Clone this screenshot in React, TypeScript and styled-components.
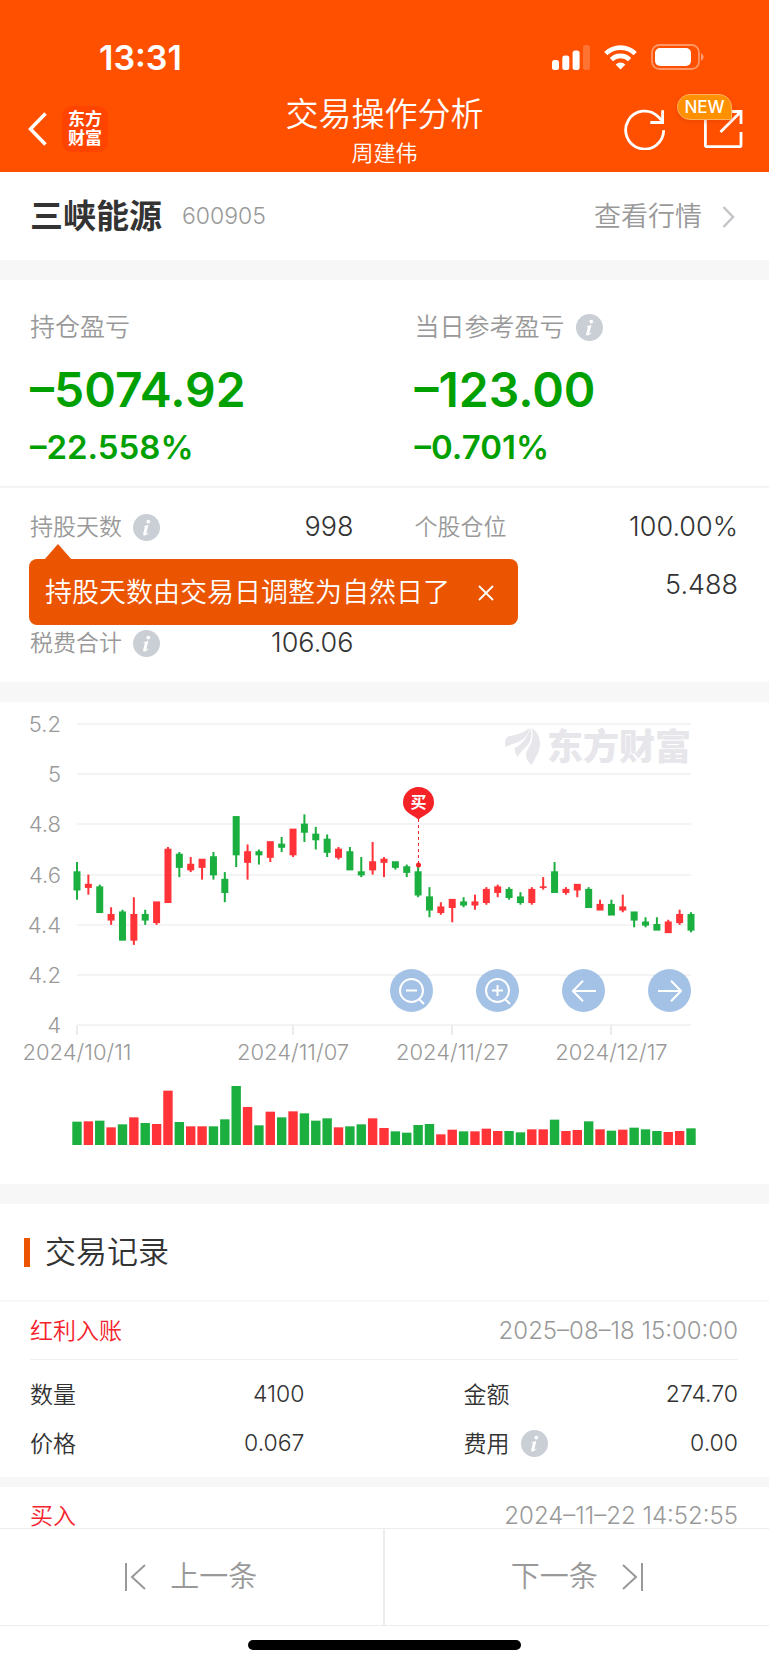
import React, { useState } from 'react';
import styled, { createGlobalStyle } from 'styled-components';

const GlobalStyle = createGlobalStyle`
  *, *::before, *::after { box-sizing: border-box; }
  body {
    margin: 0;
    background: #fff;
    color: #333;
    font-family: Inter, "Noto Sans CJK SC", sans-serif;
    font-size: 23px;
    font-weight: 350;
    line-height: 1.2;
  }
  button { font: inherit; color: inherit; border: 0; padding: 0; background: none; cursor: pointer; }
  a { color: inherit; text-decoration: none; }
  h1, h2, p, dl, dt, dd { margin: 0; font-weight: inherit; }
  svg { display: block; }
`;

const Screen = styled.div`
  display: flex;
  flex-direction: column;
  height: 100vh;
  background: #fff;
`;

/* ---------- header ---------- */

const Header = styled.header`
  flex: none;
  background: #ff5000;
  color: #fff;
`;

const StatusBar = styled.div`
  display: flex;
  align-items: center;
  justify-content: space-between;
  height: 86px;
  padding: 28px 65px 0 99px;
`;

const Clock = styled.time`
  padding-top: 2px;
  font-size: 34px;
  font-weight: 600;
  line-height: 40px;
`;

const StatusIcons = styled.div`
  display: flex;
  align-items: center;
  gap: 14px;
`;

const NavBar = styled.div`
  display: grid;
  grid-template-columns: 1fr auto 1fr;
  align-items: center;
  height: 86px;
  padding: 0 26px;
`;

const NavGroup = styled.div<{ $end?: boolean }>`
  display: flex;
  align-items: center;
  justify-content: ${(p) => (p.$end ? 'flex-end' : 'flex-start')};
  gap: ${(p) => (p.$end ? 37 : 14)}px;
`;

const Brand = styled.span`
  display: grid;
  place-content: center;
  width: 46px;
  height: 46px;
  border-radius: 10px;
  background: #ff4400;
  font-size: 17px;
  font-weight: 700;
  line-height: 19px;
  text-align: center;
`;

const TitleBlock = styled.div`
  padding-top: 3px;
  text-align: center;
`;

const Title = styled.h1`
  font-size: 33px;
  line-height: 44px;
`;

const Owner = styled.p`
  font-size: 22px;
  line-height: 34px;
`;

const ShareButton = styled.button`
  position: relative;
`;

const NewBadge = styled.span`
  position: absolute;
  right: 11px;
  top: -15px;
  width: 55px;
  height: 26px;
  border: 1px solid #ffb060;
  border-radius: 13px 13px 2px 13px;
  background: #ff9000;
  font-size: 17px;
  font-weight: 500;
  line-height: 24px;
  text-align: center;
  box-shadow: 0 2px 4px rgba(200, 60, 0, 0.3);
`;

/* ---------- body ---------- */

const Content = styled.main`
  flex: 1;
  min-height: 0;
  overflow-y: auto;
  scrollbar-width: none;
`;

const Band = styled.div<{ $size?: number }>`
  height: ${(p) => p.$size ?? 20}px;
  background: #f7f7f7;
`;

const StockRow = styled.section`
  display: flex;
  align-items: center;
  height: 88px;
  padding: 2px 34px 0 30px;
  color: #999;
`;

const StockName = styled.h2`
  margin-right: 20px;
  color: #333;
  font-size: 33px;
  font-weight: 700;
`;

const StockCode = styled.span`
  font-size: 23px;
`;

const QuoteLink = styled.a`
  display: flex;
  align-items: center;
  gap: 20px;
  margin-left: auto;
  font-size: 27px;
`;

const TwoColumns = styled.div<{ $gap: number }>`
  display: grid;
  grid-template-columns: 1fr 1fr;
  column-gap: ${(p) => p.$gap}px;
  padding: 0 31px 0 30px;
`;

const Profit = styled(TwoColumns)`
  height: 208px;
  padding-top: 27px;
  border-bottom: 2px solid #f4f4f4;
`;

const Label = styled.dt<{ $dark?: boolean; $large?: boolean }>`
  display: flex;
  align-items: center;
  gap: 11px;
  color: ${(p) => (p.$dark ? '#333' : '#999')};
  font-size: ${(p) => (p.$large ? 25 : 23)}px;
  line-height: 40px;
`;

const ProfitAmount = styled.dd`
  margin-top: 13px;
  color: #00a000;
  font-size: 48px;
  font-weight: 600;
  line-height: 60px;
`;

const ProfitRate = styled.dd`
  margin-top: 7px;
  color: #00a000;
  font-size: 33px;
  font-weight: 600;
  line-height: 40px;
`;

const Metrics = styled(TwoColumns)`
  position: relative;
  padding-top: 10px;
  padding-bottom: 10px;
`;

const MetricRow = styled.dl<{ $height: number; $column?: number }>`
  display: flex;
  align-items: center;
  justify-content: space-between;
  height: ${(p) => p.$height}px;
  ${(p) => p.$column && `grid-column: ${p.$column};`}
`;

const MetricValue = styled.dd<{ $size: number }>`
  margin-left: auto;
  font-size: ${(p) => p.$size}px;
`;

const Tip = styled.div`
  position: absolute;
  left: 29px;
  top: 71px;
  display: flex;
  align-items: center;
  gap: 28px;
  height: 66px;
  padding: 2px 24px 0 16px;
  border-radius: 8px;
  background: #eb5502;
  color: #fff;
  font-size: 27px;
  white-space: nowrap;

  &::before {
    content: '';
    position: absolute;
    left: 15px;
    top: -15px;
    border: solid transparent;
    border-width: 0 14px 16px;
    border-bottom-color: #eb5502;
  }
`;

const ChartArea = styled.section`
  position: relative;
`;

const ChartSvg = styled.svg`
  width: 100%;
  height: auto;
  font-size: 22px;
`;

const ChartTools = styled.div`
  position: absolute;
  right: 10.14%;
  top: 267px;
  display: flex;
  gap: 43px;
`;

const ToolButton = styled.button`
  display: grid;
  place-items: center;
  width: 43px;
  height: 43px;
  border-radius: 50%;
  background: rgba(146, 182, 224, 0.84);
`;

const SectionTitle = styled.h2`
  display: flex;
  align-items: center;
  gap: 15px;
  height: 98px;
  padding: 0 24px;
  border-bottom: 2px solid #f7f7f7;
  font-size: 31px;

  &::before {
    content: '';
    width: 6px;
    height: 29px;
    background: #eb5502;
  }
`;

const RecordHead = styled.div`
  display: flex;
  align-items: center;
  justify-content: space-between;
  height: 58px;
  margin: 0 31px 0 30px;
  border-bottom: 1px solid #f0f0f0;
  color: #999;
  font-size: 24px;
  line-height: 24px;
`;

const RecordType = styled.span`
  color: #f5222d;
  font-size: 23px;
`;

const RecordGrid = styled(TwoColumns)`
  padding-top: 10px;
  padding-bottom: 9px;
`;

/* ---------- footer ---------- */

const Footer = styled.footer`
  flex: none;
  background: #fff;
`;

const Pager = styled.nav`
  display: grid;
  grid-template-columns: 1fr 1fr;
  height: 98px;
  border: solid #ececec;
  border-width: 1px 0;
`;

const PagerButton = styled.button`
  display: flex;
  align-items: center;
  justify-content: center;
  gap: 24px;
  color: #999;
  font-size: 29px;

  &:first-child { border-right: 2px solid #ececec; }
`;

const HomeIndicator = styled.div`
  width: 273px;
  height: 10px;
  margin: 14px auto 15px;
  border-radius: 5px;
  background: #000;
`;

/* ---------- icons ---------- */

const InfoIcon = () => (
  <svg width="27" height="27" viewBox="0 0 27 27" role="img" aria-label="说明">
    <circle cx="13.5" cy="13.5" r="13.5" fill="#cacfd6" />
    <circle cx="15.3" cy="7.6" r="1.9" fill="#fff" />
    <path d="M10.6 12.2c1.600-.2 3-.7 4-1.300l.8.3-2 7.600c-.2.9.3.9 1.600-.2l.5.5c-1.400 1.700-2.700 2.400-3.900 2.400-1.300 0-1.700-.9-1.300-2.300l1.500-5.600c.2-.6-.3-.8-1.300-.8z" fill="#fff" />
  </svg>
);

const SignalIcon = () => (
  <svg width="38" height="25" viewBox="0 0 38 25" fill="#fff" aria-hidden="true">
    <rect x="0" y="15" width="7" height="10" rx="2.500" />
    <rect x="10.300" y="10.500" width="7" height="14.500" rx="2.500" />
    <rect x="20.600" y="5.500" width="7" height="19.500" rx="2.500" />
    <rect x="31" y="0" width="7" height="25" rx="2.500" opacity=".2" />
  </svg>
);

const WifiIcon = () => (
  <svg width="33" height="25" viewBox="0 0 33 25" aria-hidden="true">
    <g fill="none" stroke="#fff" strokeWidth="4.600">
      <path d="M1.800 8.600a21 21 0 0 1 29.400 0" />
      <path d="M7.400 14.600a13 13 0 0 1 18.200 0" />
    </g>
    <path d="M11.600 19.400a7 7 0 0 1 9.800 0L16.500 24.600z" fill="#fff" />
  </svg>
);

const BatteryIcon = () => (
  <svg width="53" height="26" viewBox="0 0 53 26" aria-hidden="true">
    <rect x="1" y="1" width="47" height="24" rx="7.500" fill="none" stroke="#fff" strokeOpacity=".4" strokeWidth="1.800" />
    <rect x="4" y="4" width="36" height="18" rx="5" fill="#fff" />
    <path d="M50 9.500c3.400 1 3.400 6 0 7z" fill="#fff" opacity=".45" />
  </svg>
);

const BackIcon = () => (
  <svg width="22" height="34" viewBox="0 0 22 34" fill="none" stroke="#fff" strokeWidth="3.500" aria-hidden="true">
    <path d="M19.500 1.500 4.500 17l15 15.500" />
  </svg>
);

const RefreshIcon = () => (
  <svg width="42" height="42" viewBox="0 0 42 42" fill="none" stroke="#fff" strokeWidth="2.800" aria-hidden="true">
    <path d="M39.700 22.300a19 19 0 1 1-5.500-13.600l4.800 4.800" />
    <path d="M38.600 2.200v12.300H26.300" />
  </svg>
);

const ShareIcon = () => (
  <svg width="40" height="40" viewBox="0 0 40 40" fill="none" stroke="#fff" strokeWidth="2.800" aria-hidden="true">
    <path d="M14 2.500H2.400v33.800q0 1.400 1.400 1.400h32.800q1.400 0 1.400-1.400V23" />
    <path d="M25 2.500h13V15M38 2.500 17.500 23" />
  </svg>
);

const ZoomIcon = ({ plus }: { plus?: boolean }) => (
  <svg width="27" height="28" viewBox="0 0 27 28" fill="none" stroke="#fff" strokeWidth="2" aria-hidden="true">
    <circle cx="13.500" cy="13.500" r="11.500" />
    <path d="M8 13.500h11M20.500 21.500l5.500 5.500" />
    {plus && <path d="M13.500 8v11" />}
  </svg>
);

const ArrowIcon = ({ right }: { right?: boolean }) => (
  <svg width="24" height="22" viewBox="0 0 24 22" fill="none" stroke="#fff" strokeWidth="2" aria-hidden="true">
    <path d={right ? 'M0 11h23M13 .8 23 11 13 21.200' : 'M24 11H1M11 .8 1 11l10 10.200'} />
  </svg>
);

const StepIcon = ({ next }: { next?: boolean }) => (
  <svg width="21" height="28" viewBox="0 0 21 28" fill="none" stroke="#999" strokeWidth="2" aria-hidden="true">
    <path d={next ? 'M20 0v28M1 2l13 12L1 26' : 'M1 0v28M20 2 7 14l13 12'} />
  </svg>
);

/* ---------- chart ---------- */

// colour, body top, body bottom, high, low, volume
type Candle = ['g' | 'r', number, number, number, number, number];

const candles: Candle[] = [
  ['g', 4.61, 4.54, 4.65, 4.5, 70], ['r', 4.56, 4.55, 4.6, 4.52, 71], ['g', 4.55, 4.45, 4.56, 4.45, 73],
  ['r', 4.44, 4.42, 4.47, 4.4, 53], ['g', 4.45, 4.34, 4.46, 4.34, 62], ['r', 4.44, 4.34, 4.51, 4.32, 83],
  ['g', 4.44, 4.42, 4.46, 4.4, 66], ['r', 4.49, 4.41, 4.49, 4.4, 63], ['r', 4.7, 4.49, 4.71, 4.49, 163],
  ['g', 4.68, 4.63, 4.69, 4.59, 69], ['r', 4.64, 4.62, 4.67, 4.61, 56], ['r', 4.66, 4.63, 4.66, 4.58, 56],
  ['g', 4.67, 4.6, 4.69, 4.58, 56], ['g', 4.58, 4.53, 4.61, 4.49, 77], ['g', 4.83, 4.68, 4.83, 4.63, 177],
  ['r', 4.69, 4.65, 4.72, 4.58, 114], ['g', 4.69, 4.68, 4.7, 4.64, 59], ['r', 4.73, 4.67, 4.73, 4.65, 100],
  ['g', 4.72, 4.71, 4.75, 4.69, 83], ['r', 4.78, 4.68, 4.78, 4.67, 101], ['g', 4.8, 4.77, 4.84, 4.73, 95],
  ['g', 4.76, 4.74, 4.79, 4.7, 73], ['g', 4.74, 4.69, 4.76, 4.67, 80], ['r', 4.7, 4.67, 4.71, 4.66, 53],
  ['g', 4.69, 4.62, 4.71, 4.62, 56], ['g', 4.61, 4.6, 4.67, 4.59, 62], ['r', 4.65, 4.62, 4.73, 4.6, 80],
  ['r', 4.66, 4.65, 4.67, 4.59, 51], ['g', 4.65, 4.63, 4.65, 4.62, 41], ['g', 4.63, 4.61, 4.64, 4.59, 37],
  ['g', 4.61, 4.52, 4.63, 4.51, 60], ['g', 4.51, 4.46, 4.55, 4.43, 63], ['r', 4.47, 4.45, 4.49, 4.44, 32],
  ['r', 4.5, 4.47, 4.5, 4.41, 46], ['g', 4.49, 4.48, 4.51, 4.47, 41], ['r', 4.49, 4.48, 4.52, 4.46, 41],
  ['r', 4.54, 4.49, 4.55, 4.48, 49], ['r', 4.55, 4.53, 4.56, 4.51, 42], ['g', 4.54, 4.51, 4.55, 4.5, 42],
  ['g', 4.51, 4.49, 4.53, 4.48, 38], ['r', 4.54, 4.49, 4.55, 4.48, 47], ['r', 4.55, 4.55, 4.59, 4.54, 47],
  ['g', 4.61, 4.53, 4.65, 4.53, 76], ['r', 4.54, 4.53, 4.55, 4.52, 42], ['r', 4.56, 4.54, 4.56, 4.51, 45],
  ['g', 4.54, 4.47, 4.55, 4.47, 71], ['r', 4.48, 4.46, 4.5, 4.46, 47], ['g', 4.48, 4.44, 4.5, 4.44, 43],
  ['r', 4.47, 4.46, 4.52, 4.45, 46], ['g', 4.45, 4.42, 4.45, 4.39, 52], ['g', 4.41, 4.4, 4.43, 4.39, 47],
  ['g', 4.4, 4.38, 4.43, 4.38, 42], ['r', 4.41, 4.37, 4.42, 4.37, 39], ['r', 4.44, 4.41, 4.46, 4.4, 42],
  ['g', 4.44, 4.38, 4.45, 4.37, 50],
];

const tone = { g: '#1aaf3f', r: '#ff3338' };
const left = 77;
const right = 691;
const step = (right - left) / (candles.length - 1);
const xAt = (i: number) => left + i * step;
const yAt = (price: number) => 22 + (5.2 - price) * 251;
const volumeBase = 443;

const prices = [5.2, 5, 4.8, 4.6, 4.4, 4.2, 4];
const dates = [
  { text: '2024/10/11', index: 0 },
  { text: '2024/11/07', index: 19 },
  { text: '2024/11/27', index: 33 },
  { text: '2024/12/17', index: 47 },
];

const Chart = () => (
  <ChartSvg viewBox="0 0 769 482" role="img" aria-label="K线图">
    {prices.map((p) => (
      <g key={p}>
        <path d={`M${left} ${Math.round(yAt(p))}H${right}`} stroke="#f4f4f5" strokeWidth="2" />
        <text x="61" y={Math.round(yAt(p)) + 8} textAnchor="end" fill="#999">{p}</text>
      </g>
    ))}
    {dates.map((d) => (
      <g key={d.text}>
        <path d={`M${Math.round(xAt(d.index))} 323v10`} stroke="#ececec" strokeWidth="2" />
        <text x={xAt(d.index)} y="358" textAnchor="middle" fill="#999">{d.text}</text>
      </g>
    ))}

    <g fill="#e6e6eb">
      <path d="M505.500 45C504.500 40 505.500 36 508 34.500C514 33 523 32 529 26C529 32 524 38 517 40.500C513 42 509 43 505.500 45Z" />
      <path d="M514.500 46C522 42.500 528 35 530 26C532 30 532 36 529 41C526 46 520 50 517.500 55C515.500 52 514.500 49 514.500 46Z" />
      <path d="M526 53C526 47 536 40 531.500 26C537 29 540 35 540 42C540 50 535 56 531.500 63C528.500 60 526 57 526 53Z" />
      <text x="547" y="58" fontSize="36" fontWeight="900">东方财富</text>
    </g>

    {candles.map(([color, top, bottom, high, low, volume], i) => {
      const x = xAt(i);
      const fill = tone[color];
      return (
        <g key={i} fill={fill}>
          <rect x={x - 1} y={yAt(high)} width="2" height={yAt(low) - yAt(high)} />
          <rect x={x - 3.5} y={yAt(top) - 0.8} width="7" height={yAt(bottom) - yAt(top) + 1.6} />
          <rect x={x - 4.7} y={volumeBase - volume / 3} width="9.400" height={volume / 3} />
        </g>
      );
    })}

    <path d="M418.500 117v46" stroke="#f52227" strokeDasharray="3 3" />
    <circle cx="418.500" cy="163" r="2.500" fill="#f52227" />
    <path d="M418.500 117.500C414 113 403 111 403 100.500a15.500 15.500 0 0 1 31 0C434 111 423 113 418.500 117.500Z" fill="#f52227" />
    <text x="418.500" y="106" fontSize="16" fontWeight="700" textAnchor="middle" fill="#fff">买</text>
  </ChartSvg>
);

export default function App() {
  const [tipOpen, setTipOpen] = useState(true);

  return (
    <Screen>
      <GlobalStyle />
      <Header>
        <StatusBar>
          <Clock>13:31</Clock>
          <StatusIcons>
            <SignalIcon />
            <WifiIcon />
            <BatteryIcon />
          </StatusIcons>
        </StatusBar>
        <NavBar>
          <NavGroup>
            <button type="button" aria-label="返回"><BackIcon /></button>
            <Brand>东方<br />财富</Brand>
          </NavGroup>
          <TitleBlock>
            <Title>交易操作分析</Title>
            <Owner>周建伟</Owner>
          </TitleBlock>
          <NavGroup $end>
            <button type="button" aria-label="刷新"><RefreshIcon /></button>
            <ShareButton type="button" aria-label="分享">
              <ShareIcon />
              <NewBadge>NEW</NewBadge>
            </ShareButton>
          </NavGroup>
        </NavBar>
      </Header>

      <Content>
        <StockRow>
          <StockName>三峡能源</StockName>
          <StockCode>600905</StockCode>
          <QuoteLink href="#quote">
            查看行情
            <svg width="13" height="22" viewBox="0 0 13 22" fill="none" stroke="#c4c4c8" strokeWidth="2.500" aria-hidden="true">
              <path d="M1.500 1 11 11 1.500 21" />
            </svg>
          </QuoteLink>
        </StockRow>
        <Band />

        <section>
          <Profit $gap={61}>
            <dl>
              <Label $large>持仓盈亏</Label>
              <ProfitAmount>–5074.92</ProfitAmount>
              <ProfitRate>–22.558%</ProfitRate>
            </dl>
            <dl>
              <Label $large>当日参考盈亏 <InfoIcon /></Label>
              <ProfitAmount>–123.00</ProfitAmount>
              <ProfitRate>–0.701%</ProfitRate>
            </dl>
          </Profit>
          <Metrics $gap={61}>
            <MetricRow $height={58}>
              <Label>持股天数 <InfoIcon /></Label>
              <MetricValue $size={27}>998</MetricValue>
            </MetricRow>
            <MetricRow $height={58}>
              <Label>个股仓位</Label>
              <MetricValue $size={27}>100.00%</MetricValue>
            </MetricRow>
            <MetricRow $height={58} $column={2}>
              <MetricValue $size={27}>5.488</MetricValue>
            </MetricRow>
            <MetricRow $height={58} $column={1}>
              <Label>税费合计 <InfoIcon /></Label>
              <MetricValue $size={27}>106.06</MetricValue>
            </MetricRow>
            {tipOpen && (
              <Tip role="status">
                持股天数由交易日调整为自然日了
                <button type="button" aria-label="关闭" onClick={() => setTipOpen(false)}>
                  <svg width="16" height="16" viewBox="0 0 16 16" stroke="#fff" strokeWidth="1.800" aria-hidden="true">
                    <path d="M1 1l14 14M15 1 1 15" />
                  </svg>
                </button>
              </Tip>
            )}
          </Metrics>
        </section>
        <Band />

        <ChartArea>
          <Chart />
          <ChartTools>
            <ToolButton type="button" aria-label="缩小"><ZoomIcon /></ToolButton>
            <ToolButton type="button" aria-label="放大"><ZoomIcon plus /></ToolButton>
            <ToolButton type="button" aria-label="向左"><ArrowIcon /></ToolButton>
            <ToolButton type="button" aria-label="向右"><ArrowIcon right /></ToolButton>
          </ChartTools>
        </ChartArea>
        <Band />

        <section>
          <SectionTitle>交易记录</SectionTitle>
          <RecordHead>
            <RecordType>红利入账</RecordType>
            <time>2025–08–18 15:00:00</time>
          </RecordHead>
          <RecordGrid $gap={159}>
            <MetricRow $height={49}>
              <Label $dark>数量</Label>
              <MetricValue $size={23}>4100</MetricValue>
            </MetricRow>
            <MetricRow $height={49}>
              <Label $dark>金额</Label>
              <MetricValue $size={23}>274.70</MetricValue>
            </MetricRow>
            <MetricRow $height={49}>
              <Label $dark>价格</Label>
              <MetricValue $size={23}>0.067</MetricValue>
            </MetricRow>
            <MetricRow $height={49}>
              <Label $dark>费用 <InfoIcon /></Label>
              <MetricValue $size={23}>0.00</MetricValue>
            </MetricRow>
          </RecordGrid>
          <Band $size={10} />
          <RecordHead>
            <RecordType>买入</RecordType>
            <time>2024–11–22 14:52:55</time>
          </RecordHead>
        </section>
      </Content>

      <Footer>
        <Pager>
          <PagerButton type="button"><StepIcon /> 上一条</PagerButton>
          <PagerButton type="button">下一条 <StepIcon next /></PagerButton>
        </Pager>
        <HomeIndicator />
      </Footer>
    </Screen>
  );
}
